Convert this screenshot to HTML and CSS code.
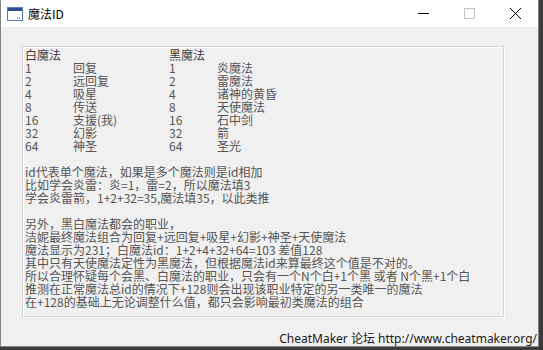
FILE: index.html
```html
<!DOCTYPE html>
<html lang="zh-CN">
<head>
<meta charset="utf-8">
<title>魔法ID</title>
<link rel="stylesheet" href="styles.css">
</head>
<body>
<div class="window">
  <div class="titlebar">
    <svg class="app-icon" width="16" height="14" viewBox="0 0 16 14">
      <rect x="0.5" y="0.5" width="15" height="13" fill="#fff" stroke="#5a7fb0"/>
      <rect x="1" y="1" width="14" height="3" fill="#2f4f8f"/>
      <rect x="10" y="10" width="1" height="2" fill="#c8a040"/>
      <rect x="12" y="10" width="1" height="2" fill="#c8a040"/>
    </svg>
    <span class="title">魔法ID</span>
    <div class="controls">
      <svg class="ctl min" width="46" height="27" viewBox="0 0 46 27"><line x1="18" y1="13.5" x2="29" y2="13.5" stroke="#000" stroke-width="1"/></svg>
      <svg class="ctl max" width="46" height="27" viewBox="0 0 46 27"><rect x="18.5" y="8.5" width="10" height="10" fill="none" stroke="#c4c4c4" stroke-width="1"/></svg>
      <svg class="ctl close" width="46" height="27" viewBox="0 0 46 27"><path d="M18 8 L29 19 M29 8 L18 19" stroke="#000" stroke-width="1" fill="none"/></svg>
    </div>
  </div>
  <div class="client">
    <div class="panel">
      <div class="table">
        <span class="head">白魔法</span><span></span><span class="head">黑魔法</span><span></span>
        <span>1</span><span>回复</span><span>1</span><span>炎魔法</span>
        <span>2</span><span>远回复</span><span>2</span><span>雷魔法</span>
        <span>4</span><span>吸星</span><span>4</span><span>诸神的黄昏</span>
        <span>8</span><span>传送</span><span>8</span><span>天使魔法</span>
        <span>16</span><span>支援(我)</span><span>16</span><span>石中剑</span>
        <span>32</span><span>幻影</span><span>32</span><span>箭</span>
        <span>64</span><span>神圣</span><span>64</span><span>圣光</span>
      </div>
      <div class="blank"></div>
      <p>id代表单个魔法，如果是多个魔法则是id相加</p>
      <p>比如学会炎雷：炎=1，雷=2，所以魔法填3</p>
      <p>学会炎雷箭，1+2+32=35,魔法填35，以此类推</p>
      <div class="blank"></div>
      <p>另外，黑白魔法都会的职业，</p>
      <p>洁妮最终魔法组合为回复+远回复+吸星+幻影+神圣+天使魔法</p>
      <p>魔法显示为231；白魔法id：1+2+4+32+64=103 差值128</p>
      <p>其中只有天使魔法定性为黑魔法，但根据魔法id来算最终这个值是不对的。</p>
      <p>所以合理怀疑每个会黑、白魔法的职业，只会有一个N个白+1个黑 或者 N个黑+1个白</p>
      <p>推测在正常魔法总id的情况下+128则会出现该职业特定的另一类唯一的魔法</p>
      <p>在+128的基础上无论调整什么值，都只会影响最初类魔法的组合</p>
    </div>
    <div class="footer">CheatMaker 论坛 http://www.cheatmaker.org/</div>
  </div>
</div>
</body>
</html>
```
FILE: styles.css
```css
* { box-sizing: border-box; }
html, body {
  margin: 0;
  padding: 0;
  background: #3b3b3b;
  width: 543px;
  height: 350px;
  overflow: hidden;
}
.window {
  width: 539px;
  height: 347px;
  background: #f0f0f0;
  border: 1px solid #858585;
  border-top: none;
  display: flex;
  flex-direction: column;
}
.titlebar {
  height: 27px;
  background: #fff;
  display: flex;
  align-items: center;
  font-family: "Noto Sans CJK SC", "Noto Sans", sans-serif;
  font-size: 12px;
  color: #000;
}
.app-icon {
  margin-left: 6px;
  margin-top: 1px;
}
.title {
  margin-left: 5px;
  line-height: 27px;
}
.controls {
  margin-left: auto;
  display: flex;
}
.ctl { display: block; }
.client {
  flex: 1;
  display: flex;
  flex-direction: column;
  padding: 19px 0 0 21px;
}
.panel {
  width: 482px;
  height: 271px;
  border: 1px solid #d6d6d6;
  box-shadow: inset 1px 1px 0 #fff, 1px 1px 0 #fff;
  padding: 1px 0 0 2px;
  font-family: "Noto Sans CJK SC", "Noto Sans", sans-serif;
  font-size: 12px;
  line-height: 13px;
  color: #555;
}
.table {
  display: grid;
  grid-template-columns: 48px 96px 48px auto;
}
.head { color: #3c3c3c; }
.blank { height: 13px; }
.panel p {
  margin: 0;
  white-space: nowrap;
}
.footer {
  margin-top: auto;
  align-self: flex-end;
  padding: 0 1px 0 0;
  font-family: "Noto Sans", "Noto Sans CJK SC", sans-serif;
  font-size: 12px;
  line-height: 14px;
  color: #1b1b1b;
}
```
